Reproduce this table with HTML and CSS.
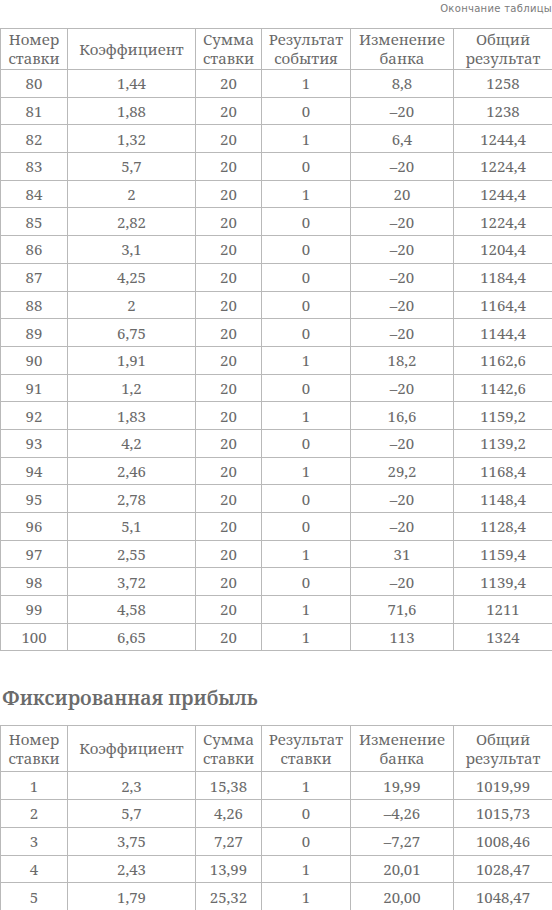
FILE: index.html
```html
<!DOCTYPE html>
<html lang="ru">
<head>
<meta charset="utf-8">
<link rel="stylesheet" href="styles.css">
</head>
<body>
<div class="page">
  <div class="caption">Окончание таблицы</div>
  <table class="bets bets-first">
    <colgroup>
      <col class="c1"><col class="c2"><col class="c3"><col class="c4"><col class="c5"><col class="c6">
    </colgroup>
    <thead>
      <tr><th>Номер<br>ставки</th><th>Коэффициент</th><th>Сумма<br>ставки</th><th>Результат<br>события</th><th>Изменение<br>банка</th><th>Общий<br>результат</th></tr>
    </thead>
    <tbody>
      <tr><td>80</td><td>1,44</td><td>20</td><td>1</td><td>8,8</td><td>1258</td></tr>
      <tr><td>81</td><td>1,88</td><td>20</td><td>0</td><td>–20</td><td>1238</td></tr>
      <tr><td>82</td><td>1,32</td><td>20</td><td>1</td><td>6,4</td><td>1244,4</td></tr>
      <tr><td>83</td><td>5,7</td><td>20</td><td>0</td><td>–20</td><td>1224,4</td></tr>
      <tr><td>84</td><td>2</td><td>20</td><td>1</td><td>20</td><td>1244,4</td></tr>
      <tr><td>85</td><td>2,82</td><td>20</td><td>0</td><td>–20</td><td>1224,4</td></tr>
      <tr><td>86</td><td>3,1</td><td>20</td><td>0</td><td>–20</td><td>1204,4</td></tr>
      <tr><td>87</td><td>4,25</td><td>20</td><td>0</td><td>–20</td><td>1184,4</td></tr>
      <tr><td>88</td><td>2</td><td>20</td><td>0</td><td>–20</td><td>1164,4</td></tr>
      <tr><td>89</td><td>6,75</td><td>20</td><td>0</td><td>–20</td><td>1144,4</td></tr>
      <tr><td>90</td><td>1,91</td><td>20</td><td>1</td><td>18,2</td><td>1162,6</td></tr>
      <tr><td>91</td><td>1,2</td><td>20</td><td>0</td><td>–20</td><td>1142,6</td></tr>
      <tr><td>92</td><td>1,83</td><td>20</td><td>1</td><td>16,6</td><td>1159,2</td></tr>
      <tr><td>93</td><td>4,2</td><td>20</td><td>0</td><td>–20</td><td>1139,2</td></tr>
      <tr><td>94</td><td>2,46</td><td>20</td><td>1</td><td>29,2</td><td>1168,4</td></tr>
      <tr><td>95</td><td>2,78</td><td>20</td><td>0</td><td>–20</td><td>1148,4</td></tr>
      <tr><td>96</td><td>5,1</td><td>20</td><td>0</td><td>–20</td><td>1128,4</td></tr>
      <tr><td>97</td><td>2,55</td><td>20</td><td>1</td><td>31</td><td>1159,4</td></tr>
      <tr><td>98</td><td>3,72</td><td>20</td><td>0</td><td>–20</td><td>1139,4</td></tr>
      <tr><td>99</td><td>4,58</td><td>20</td><td>1</td><td>71,6</td><td>1211</td></tr>
      <tr><td>100</td><td>6,65</td><td>20</td><td>1</td><td>113</td><td>1324</td></tr>
    </tbody>
  </table>

  <h2 class="section-title">Фиксированная прибыль</h2>

  <table class="bets bets-second">
    <colgroup>
      <col class="c1"><col class="c2"><col class="c3"><col class="c4"><col class="c5"><col class="c6">
    </colgroup>
    <thead>
      <tr><th>Номер<br>ставки</th><th>Коэффициент</th><th>Сумма<br>ставки</th><th>Результат<br>ставки</th><th>Изменение<br>банка</th><th>Общий<br>результат</th></tr>
    </thead>
    <tbody>
      <tr><td>1</td><td>2,3</td><td>15,38</td><td>1</td><td>19,99</td><td>1019,99</td></tr>
      <tr><td>2</td><td>5,7</td><td>4,26</td><td>0</td><td>–4,26</td><td>1015,73</td></tr>
      <tr><td>3</td><td>3,75</td><td>7,27</td><td>0</td><td>–7,27</td><td>1008,46</td></tr>
      <tr><td>4</td><td>2,43</td><td>13,99</td><td>1</td><td>20,01</td><td>1028,47</td></tr>
      <tr><td>5</td><td>1,79</td><td>25,32</td><td>1</td><td>20,00</td><td>1048,47</td></tr>
    </tbody>
  </table>
</div>
</body>
</html>
```

FILE: styles.css
```css
html, body {
  margin: 0;
  padding: 0;
  background: #ffffff;
}

.page {
  width: 552px;
  font-family: "Noto Serif", "DejaVu Serif", serif;
  color: #6a6a6a;
}

.caption {
  font-family: "DejaVu Sans", "Noto Sans", sans-serif;
  font-size: 10px;
  letter-spacing: 0.3px;
  color: #7a7a7a;
  text-align: right;
  height: 28px;
  line-height: 18px;
}

.bets {
  width: 552px;
  border-collapse: collapse;
  table-layout: fixed;
  font-size: 15px;
}

.c1 { width: 67px; }
.c2 { width: 128px; }
.c3 { width: 66px; }
.c4 { width: 89px; }
.c5 { width: 103px; }
.c6 { width: 99px; }

.bets th,
.bets td {
  border: 1px solid #b9b9b9;
  text-align: center;
  padding: 0;
  font-weight: normal;
}

.bets th {
  line-height: 19px;
}

.bets-first th { height: 40px; }
.bets-second th { height: 45px; }

.bets td {
  height: 26.7px;
  line-height: 20px;
}

.section-title {
  margin: 0;
  padding: 36px 0 16px 2px;
  font-size: 19.4px;
  font-weight: 600;
  line-height: 22px;
  color: #6b6b6b;
}
```
